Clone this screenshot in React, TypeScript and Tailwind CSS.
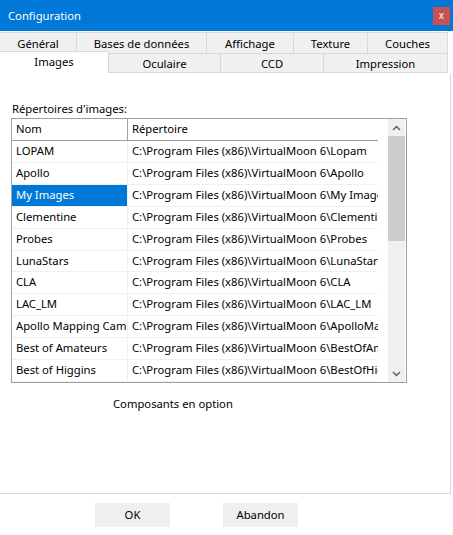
import React from "react";

const rows = [
  ["LOPAM", "C:\\Program Files (x86)\\VirtualMoon 6\\Lopam"],
  ["Apollo", "C:\\Program Files (x86)\\VirtualMoon 6\\Apollo"],
  ["My Images", "C:\\Program Files (x86)\\VirtualMoon 6\\My Images"],
  ["Clementine", "C:\\Program Files (x86)\\VirtualMoon 6\\Clementine"],
  ["Probes", "C:\\Program Files (x86)\\VirtualMoon 6\\Probes"],
  ["LunaStars", "C:\\Program Files (x86)\\VirtualMoon 6\\LunaStars"],
  ["CLA", "C:\\Program Files (x86)\\VirtualMoon 6\\CLA"],
  ["LAC_LM", "C:\\Program Files (x86)\\VirtualMoon 6\\LAC_LM"],
  ["Apollo Mapping Camera", "C:\\Program Files (x86)\\VirtualMoon 6\\ApolloMapping"],
  ["Best of Amateurs", "C:\\Program Files (x86)\\VirtualMoon 6\\BestOfAmateurs"],
  ["Best of Higgins", "C:\\Program Files (x86)\\VirtualMoon 6\\BestOfHiggins"],
];

export default function App() {
  return (
    <div
      className="w-[453px] h-[535px] bg-white overflow-hidden flex flex-col text-[11.25px] text-[#000]"
      style={{ fontFamily: '"Noto Sans", "Open Sans", sans-serif' }}
    >
      {/* Title bar */}
      <div className="h-[31px] bg-[#0078d7] flex items-center justify-between pl-[8px] pr-[3px] shrink-0">
        <span className="text-white text-[11.25px] leading-none">Configuration</span>
        <div className="w-[17px] h-[18px] bg-[#c75050] flex items-center justify-center text-white text-[10px] leading-none pb-[2px]">
          x
        </div>
      </div>

      {/* Tabs */}
      <div className="h-[42px] mt-[1px] flex flex-col shrink-0 w-[448px]">
        <div className="flex h-[21px]">
          {[
            ["Général", "w-[77px]"],
            ["Bases de données", "w-[130px]"],
            ["Affichage", "w-[87px]"],
            ["Texture", "w-[74px]"],
            ["Couches", "w-[80px]"],
          ].map(([t, w]) => (
            <div
              key={t}
              className={`${w} h-full bg-[#f0f0f0] border-t border-r border-[#d9d9d9] flex items-center justify-center leading-none pt-[1px]`}
            >
              {t}
            </div>
          ))}
        </div>
        <div className="flex h-[20px] border-b border-[#d9d9d9]">
          <div className="w-[109px] h-[22px] -mt-[2px] bg-white border-t border-r border-[#d9d9d9] relative z-10 flex items-center justify-center leading-none pb-[1px]">
            Images
          </div>
          {[
            ["Oculaire", "w-[112px]"],
            ["CCD", "w-[103px]"],
            ["Impression", "w-[124px]"],
          ].map(([t, w]) => (
            <div
              key={t}
              className={`${w} h-full bg-[#f0f0f0] border-t border-r border-[#d9d9d9] flex items-center justify-center leading-none pt-[1px]`}
            >
              {t}
            </div>
          ))}
        </div>
      </div>

      {/* Panel */}
      <div className="w-[451px] h-[420px] bg-white border-r border-b border-[#d9d9d9] shrink-0 flex flex-col">
        <div className="h-[27px]" />
        <div className="pl-[12px] h-[16px] leading-[16px]">Répertoires d'images:</div>
        <div className="ml-[11px] mt-[1px] w-[396px] h-[265px] border border-[#a0a0a0] flex">
          <div className="w-[366px] flex flex-col">
            <div className="flex h-[22px] border-b border-[#a0a0a0]">
              <div className="w-[116px] border-r border-[#a0a0a0] pl-[4px] flex items-center">Nom</div>
              <div className="w-[250px] pl-[4px] flex items-center">Répertoire</div>
            </div>
            {rows.map(([n, p], i) => (
              <div key={n} className="flex h-[22px] border-b border-[#f0f0f0]">
                <div
                  className={`w-[116px] border-r border-[#f0f0f0] pl-[4px] flex items-center whitespace-nowrap overflow-hidden ${
                    i === 2 ? "bg-[#0078d7] text-white" : ""
                  }`}
                >
                  {n}
                </div>
                <div className="w-[250px] pl-[4px] flex items-center whitespace-nowrap overflow-hidden">{p}</div>
              </div>
            ))}
          </div>
          <div className="w-[10px]" />
          <div className="w-[17px] h-full bg-[#f0f0f0] flex flex-col">
            <div className="h-[17px] flex items-center justify-center">
              <svg width="9" height="6" viewBox="0 0 9 6">
                <path d="M1 5 L4.5 1.5 L8 5" fill="none" stroke="#606060" strokeWidth="1.5" />
              </svg>
            </div>
            <div className="h-[105px] bg-[#cdcdcd]" />
            <div className="flex-1" />
            <div className="h-[17px] flex items-center justify-center">
              <svg width="9" height="6" viewBox="0 0 9 6">
                <path d="M1 1 L4.5 4.5 L8 1" fill="none" stroke="#606060" strokeWidth="1.5" />
              </svg>
            </div>
          </div>
        </div>
        <div className="mt-[13px] pl-[113px] h-[16px] leading-[16px]">Composants en option</div>
      </div>

      {/* Buttons */}
      <div className="flex mt-[9px] pl-[95px] gap-[53px]">
        <div className="w-[75px] h-[24px] bg-[#efefef] flex items-center justify-center">OK</div>
        <div className="w-[75px] h-[24px] bg-[#efefef] flex items-center justify-center">Abandon</div>
      </div>
    </div>
  );
}
